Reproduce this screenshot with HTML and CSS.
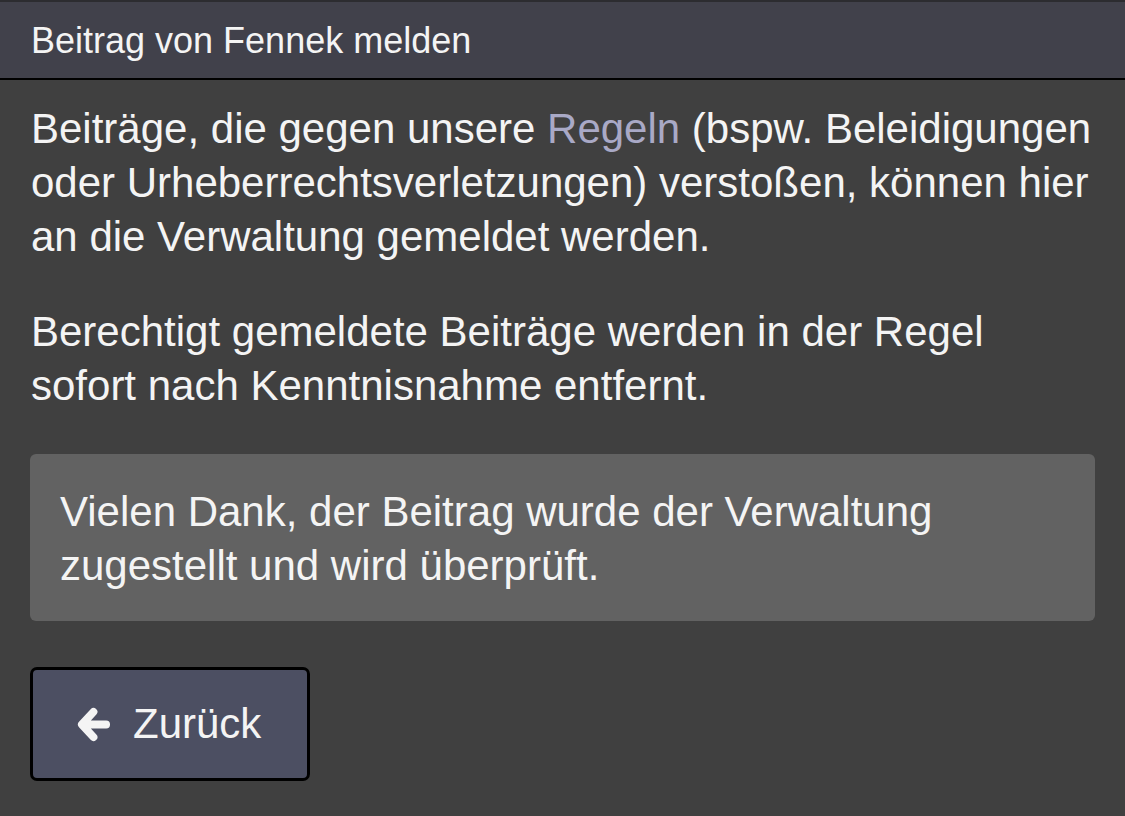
FILE: index.html
```html
<!DOCTYPE html>
<html lang="de">
<head>
    <meta charset="UTF-8">
    <meta name="viewport" content="width=device-width, initial-scale=1.0">
    <title>Beitrag melden</title>
    <link rel="stylesheet" href="styles.css">
</head>
<body>
    <div class="header">Beitrag von Fennek melden</div>

    <div class="content">
        <p>Beiträge, die gegen unsere <a href="#">Regeln</a> (bspw. Beleidigungen oder Urheberrechtsverletzungen) verstoßen, können hier an die Verwaltung gemeldet werden.</p>

        <p>Berechtigt gemeldete Beiträge werden in der Regel sofort nach Kenntnisnahme entfernt.</p>

        <div class="notice">
            Vielen Dank, der Beitrag wurde der Verwaltung zugestellt und wird überprüft.
        </div>

        <button type="button" class="back-button">
            <svg class="icon" viewBox="0 0 36 36" width="35" height="35">
                <path d="M18 5 L6 18 L18 31 M7 18 L31 18" fill="none" stroke="#f4f4f4" stroke-width="8" stroke-linecap="round" stroke-linejoin="round"/>
            </svg>
            Zurück
        </button>
    </div>
</body>
</html>
```

FILE: styles.css
```css
body {
    font-family: "Liberation Sans", Arial, sans-serif;
    background-color: #404040;
    color: #f4f4f4;
    margin: 0;
    padding: 0;
}

.header {
    background-color: #41414b;
    border-top: 2px solid #2c2c30;
    border-bottom: 2px solid #000;
    height: 76px;
    line-height: 78px;
    padding: 0 31px;
    font-size: 36px;
}

.content {
    padding: 22px 30px 0 31px;
}

p {
    font-size: 42px;
    line-height: 54px;
    margin: 0 0 41px 0;
}

a {
    color: #a9a9c6;
    text-decoration: none;
}

.notice {
    background-color: #626262;
    border-radius: 6px;
    margin-left: -1px;
    padding: 31px 30px 28px 30px;
    font-size: 42px;
    line-height: 54px;
}

.back-button {
    display: flex;
    align-items: center;
    gap: 22px;
    margin-top: 46px;
    margin-left: -1px;
    width: 280px;
    height: 114px;
    padding: 0 0 0 43px;
    background-color: #4c4f62;
    border: 3px solid #000;
    border-radius: 7px;
    color: #f4f4f4;
    font-family: "Liberation Sans", Arial, sans-serif;
    font-size: 42px;
    cursor: pointer;
}

.icon {
    flex-shrink: 0;
}
```
